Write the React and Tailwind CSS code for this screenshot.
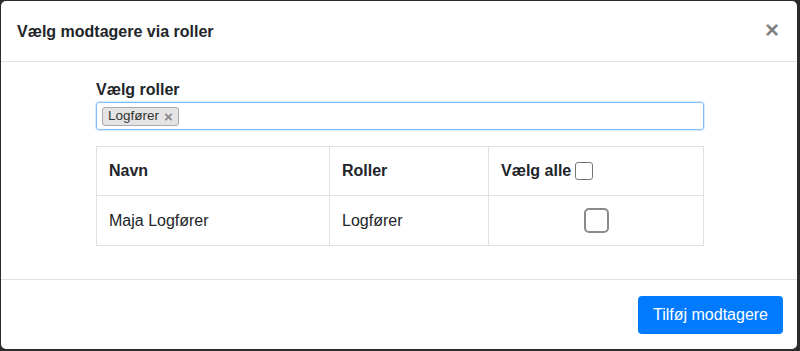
export default function App() {
  return (
    <div className="w-[800px] h-[351px] bg-[#2a2d2a] pt-px pl-px pr-[3px] pb-[2px] font-['Liberation_Sans',Arial,sans-serif] text-[#212529]">
      <div className="h-full bg-white rounded-[5px] flex flex-col overflow-hidden">
        <div className="h-[61px] shrink-0 flex items-center justify-between pl-4 pr-4 border-b border-[#dee2e6]">
          <h5 className="text-[16px] font-bold leading-6 pt-[2px]">Vælg modtagere via roller</h5>
          <button className="text-[24px] font-bold leading-none text-black/50 pr-[2px] pb-[2px]">×</button>
        </div>

        <div className="flex-1 pt-4 pb-4 pl-[2px]">
          <div className="mx-auto w-[608px]">
            <label className="block text-[16px] font-bold leading-6">Vælg roller</label>
            <div className="h-[28px] border border-[#80bdff] rounded-[3px] shadow-[0_0_0_1px_rgba(0,123,255,0.15)] flex items-center px-[5px]">
              <span className="h-[19px] flex items-center gap-[5px] bg-[#e4e4e4] border border-[#aaa] rounded-[3px] px-[5px] text-[13.5px] leading-none text-[#333]">
                Logfører
                <span className="text-[#888] font-bold text-[15px]">×</span>
              </span>
            </div>

            <table className="mt-4 w-full border-collapse border border-[#dee2e6] text-[16px]">
              <thead>
                <tr className="h-[49px]">
                  <th className="w-[233px] border border-[#dee2e6] px-3 text-left font-bold">Navn</th>
                  <th className="w-[159px] border border-[#dee2e6] px-3 text-left font-bold">Roller</th>
                  <th className="border border-[#dee2e6] px-3 text-left font-bold">
                    <span className="inline-flex items-center gap-1">
                      Vælg alle
                      <span className="inline-block w-[18px] h-[18px] border border-[#767676] rounded-[3px] bg-white" />
                    </span>
                  </th>
                </tr>
              </thead>
              <tbody>
                <tr className="h-[50px]">
                  <td className="border border-[#dee2e6] px-3">Maja Logfører</td>
                  <td className="border border-[#dee2e6] px-3">Logfører</td>
                  <td className="border border-[#dee2e6] px-3">
                    <div className="flex justify-center">
                      <span className="block w-[25px] h-[25px] border-2 border-[#8a8a8a] rounded-[5px] bg-white" />
                    </div>
                  </td>
                </tr>
              </tbody>
            </table>
          </div>
        </div>

        <div className="h-[70px] shrink-0 border-t border-[#dee2e6] flex items-center justify-end pr-[14px]">
          <button className="h-[38px] px-[15px] bg-[#007bff] text-white text-[16px] rounded-[4px] mt-[1px]">Tilføj modtagere</button>
        </div>
      </div>
    </div>
  );
}
